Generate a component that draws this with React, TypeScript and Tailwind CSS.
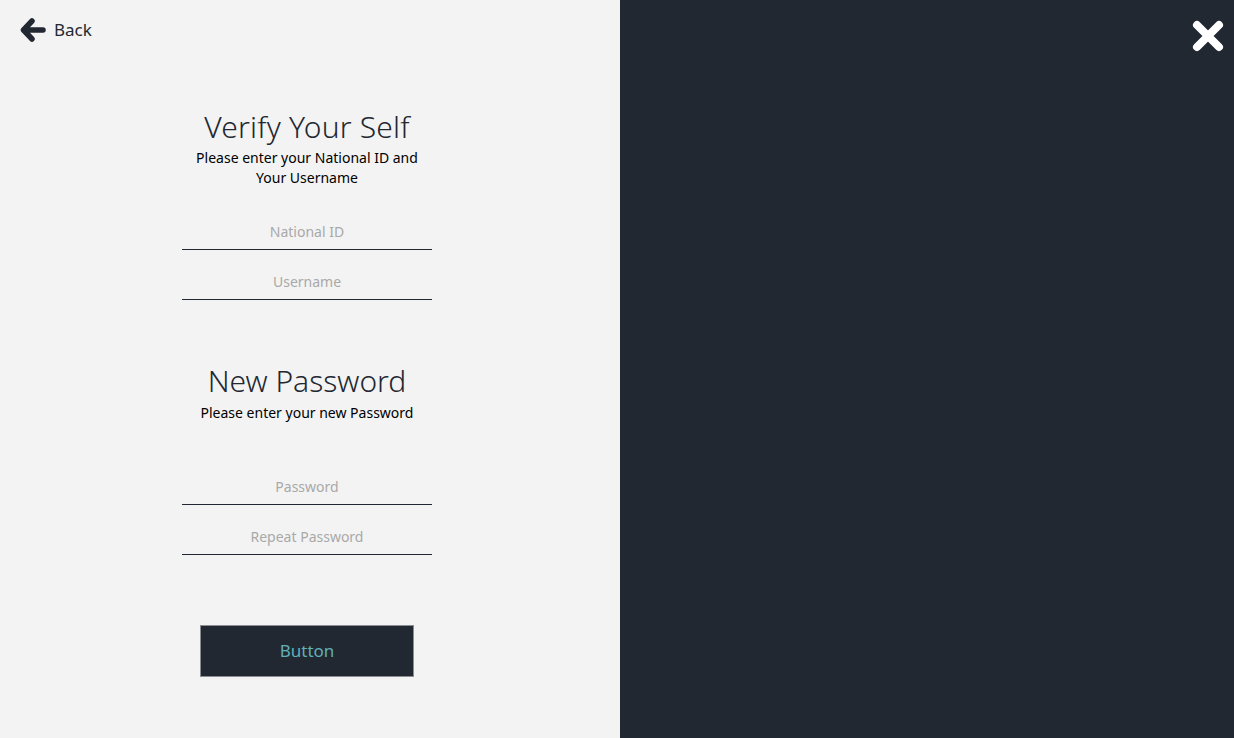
import React from "react"

function Field({ placeholder }: { placeholder: string }) {
    return (
        <div className="w-[250px] border-b border-[#222831]">
            <input
                className="w-full h-[36px] bg-transparent text-center text-[14px] text-[#222831] placeholder:text-[#a9a9a9] outline-none"
                placeholder={placeholder}
            />
        </div>
    )
}

export default function App() {
    return (
        <div className="flex w-[1234px] h-[738px] overflow-hidden" style={{ fontFamily: '"Noto Sans", "Open Sans", sans-serif' }}>
            <div className="w-[620px] h-full bg-[#f3f3f3] flex flex-col">
                <div className="flex items-center gap-[8px] pl-[20px] pt-[16px] h-[44px]">
                    <svg width="26" height="26" viewBox="0 0 26 26">
                        <path d="M12 4 L3.5 13 L12 22 M4 13 H23" fill="none" stroke="#222831" strokeWidth="5.5" strokeLinecap="round" strokeLinejoin="round" />
                    </svg>
                    <span className="text-[17px] text-[#222831]">Back</span>
                </div>

                <div className="w-[250px] ml-[182px] flex flex-col items-center">
                    <h1 className="mt-[65px] text-[30px] leading-[36px] font-light text-[#222831] tracking-[0.2px]">Verify Your Self</h1>
                    <p className="text-[14px] leading-[20px] text-black text-center w-[240px] mt-[3px]">
                        Please enter your National ID and Your Username
                    </p>
                    <div className="mt-[25px] flex flex-col gap-[13px]">
                        <Field placeholder="National ID" />
                        <Field placeholder="Username" />
                    </div>

                    <h1 className="mt-[63px] text-[30px] leading-[36px] font-light text-[#222831]">New Password</h1>
                    <p className="text-[14px] leading-[20px] text-black text-center mt-[4px]">Please enter your new Password</p>
                    <div className="mt-[45px] flex flex-col gap-[13px]">
                        <Field placeholder="Password" />
                        <Field placeholder="Repeat Password" />
                    </div>

                    <button className="mt-[70px] w-[214px] h-[52px] bg-[#222831] border border-[#8a8d92] text-[17px] text-[#5fb0b7]">
                        Button
                    </button>
                </div>
            </div>
            <div className="flex-1 h-full bg-[#222831] flex justify-end">
                <svg className="mt-[20px] mr-[10px]" width="32" height="32" viewBox="0 0 32 32">
                    <path d="M5 5 L27 27 M27 5 L5 27" stroke="#ffffff" strokeWidth="8" strokeLinecap="round" />
                </svg>
            </div>
        </div>
    )
}
